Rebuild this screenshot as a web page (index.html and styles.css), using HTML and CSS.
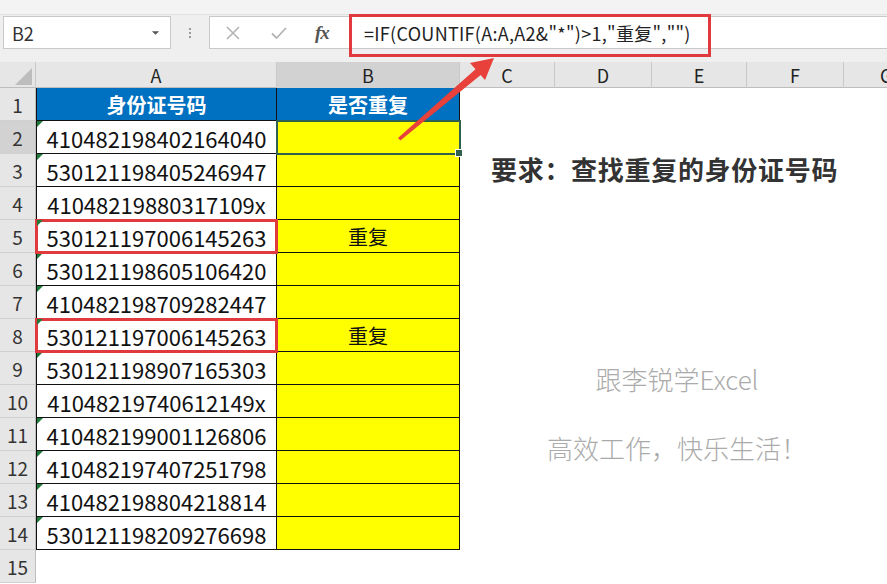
FILE: index.html
```html
<!DOCTYPE html>
<html lang="zh-CN">
<head>
<meta charset="UTF-8" />
<meta name="viewport" content="width=device-width, initial-scale=1" />
<title>查找重复的身份证号码</title>
<link rel="stylesheet" href="styles.css">
</head>
<body>

  <div class="top-strip"></div>

  <!-- barra de fórmulas -->
  <div class="formula-bar">
    <div class="name-box">
      <span>B2</span>
      <svg class="caret" viewBox="0 0 10 6" aria-hidden="true"><path d="M1 1h8L5 5z" fill="#555"/></svg>
    </div>
    <div class="grip"><i></i><i></i><i></i></div>
    <div class="formula-box">
      <div class="fx-buttons">
        <svg viewBox="0 0 20 20" aria-hidden="true"><path d="M4 4l12 12M16 4L4 16" stroke="#b4b4b4" stroke-width="1.6" fill="none"/></svg>
        <svg viewBox="0 0 20 20" aria-hidden="true"><path d="M3 10.5l4.5 4.5L17 5" stroke="#b4b4b4" stroke-width="1.8" fill="none"/></svg>
        <span class="fx">fx</span>
      </div>
      <div class="formula-input">=IF(COUNTIF(A:A,A2&amp;"*")&gt;1,"重复","")</div>
    </div>
  </div>

  <div class="sheet">
    <div class="col-heads">
      <div class="corner"><span></span></div>
      <div class="ch">A</div>
      <div class="ch sel">B</div>
      <div class="ch">C</div>
      <div class="ch">D</div>
      <div class="ch">E</div>
      <div class="ch">F</div>
      <div class="ch last">G</div>
    </div>

    <div class="row"><div class="rh">1</div><div class="cell a head">身份证号码</div><div class="cell head">是否重复</div></div>
    <div class="row"><div class="rh sel">2</div><div class="cell a flag">410482198402164040</div><div class="cell dup active"><span class="handle"></span></div></div>
    <div class="row"><div class="rh">3</div><div class="cell a flag">530121198405246947</div><div class="cell dup"></div></div>
    <div class="row"><div class="rh">4</div><div class="cell a">41048219880317109x</div><div class="cell dup"></div></div>
    <div class="row"><div class="rh">5</div><div class="cell a flag mark">530121197006145263</div><div class="cell dup">重复</div></div>
    <div class="row"><div class="rh">6</div><div class="cell a flag">530121198605106420</div><div class="cell dup"></div></div>
    <div class="row"><div class="rh">7</div><div class="cell a flag">410482198709282447</div><div class="cell dup"></div></div>
    <div class="row"><div class="rh">8</div><div class="cell a flag mark">530121197006145263</div><div class="cell dup">重复</div></div>
    <div class="row"><div class="rh">9</div><div class="cell a flag">530121198907165303</div><div class="cell dup"></div></div>
    <div class="row"><div class="rh">10</div><div class="cell a">41048219740612149x</div><div class="cell dup"></div></div>
    <div class="row"><div class="rh">11</div><div class="cell a flag">410482199001126806</div><div class="cell dup"></div></div>
    <div class="row"><div class="rh">12</div><div class="cell a flag">410482197407251798</div><div class="cell dup"></div></div>
    <div class="row"><div class="rh">13</div><div class="cell a flag">410482198804218814</div><div class="cell dup"></div></div>
    <div class="row"><div class="rh">14</div><div class="cell a flag">530121198209276698</div><div class="cell dup"></div></div>
    <div class="row"><div class="rh">15</div></div>

    <!-- cuadros de texto sobre la hoja -->
    <div class="note-title">要求：查找重复的身份证号码</div>
    <div class="note-sign">
      <p>跟李锐学Excel</p>
      <p>高效工作，快乐生活！</p>
    </div>
  </div>

  <!-- anotaciones rojas -->
  <div class="formula-mark"></div>
  <svg class="arrow" viewBox="0 0 887 584" aria-hidden="true">
    <path d="M399 138L400.5 139.5L482 73L478 68z" fill="#e8403a" stroke="#e8403a" stroke-width="1.5" stroke-linejoin="round"/>
    <polygon points="494,58 485,80 470,63" fill="#e8403a"/>
  </svg>

</body>
</html>
```

FILE: styles.css
```css
body {
  margin: 0;
  width: 887px;
  height: 584px;
  overflow: hidden;
  position: relative;
  background: #fff;
  font-family: "Noto Sans CJK SC", "Noto Sans", sans-serif;
  color: #222;
}
.top-strip {
  height: 14px;
  background: #f3f3f3;
  border-bottom: 1px solid #e1e1e1;
}
.formula-bar {
  height: 47px;
  background: #efefef;
  display: flex;
  align-items: flex-start;
  padding-top: 1px;
  box-sizing: border-box;
}
.name-box {
  margin-left: 3px;
  width: 168px;
  height: 33px;
  box-sizing: border-box;
  background: #fff;
  border: 1px solid #c9c9c9;
  display: flex;
  align-items: center;
  justify-content: space-between;
  padding: 0 10px 0 8px;
  font-size: 18px;
  color: #333;
}
.name-box .caret {
  width: 9px;
  height: 6px;
}
.grip {
  width: 38px;
  height: 33px;
  display: flex;
  flex-direction: column;
  align-items: center;
  justify-content: center;
  gap: 2px;
}
.grip i {
  width: 2px;
  height: 2px;
  background: #9a9a9a;
}
.formula-box {
  flex: 1;
  height: 33px;
  box-sizing: border-box;
  background: #fff;
  border: 1px solid #c9c9c9;
  border-right: none;
  display: flex;
  align-items: center;
}
.fx-buttons {
  width: 140px;
  display: flex;
  align-items: center;
  padding-left: 13px;
  gap: 26px;
  box-sizing: border-box;
}
.fx-buttons svg {
  width: 20px;
  height: 20px;
}
.fx {
  font-family: "Liberation Serif", serif;
  font-style: italic;
  font-weight: 700;
  font-size: 19px;
  color: #555;
  letter-spacing: -1px;
}
.formula-input {
  padding-left: 14px;
  font-size: 18px;
  letter-spacing: 0.3px;
  color: #222;
  white-space: nowrap;
}

/* hoja */
.sheet {
  position: relative;
}
.col-heads {
  display: grid;
  grid-template-columns: 36px 241px 183px 95px 97px 95px 97px 1fr;
  height: 26px;
  background: #e6e6e6;
  border-bottom: 1px solid #bdbdbd;
  box-sizing: border-box;
}
.corner {
  position: relative;
  border-right: 1px solid #c9c9c9;
}
.corner span {
  position: absolute;
  right: 3px;
  bottom: 3px;
  width: 0;
  height: 0;
  border-left: 17px solid transparent;
  border-bottom: 17px solid #bdbdbd;
}
.ch {
  border-right: 1px solid #c9c9c9;
  text-align: center;
  font-size: 18px;
  line-height: 26px;
  color: #222;
}
.ch.sel {
  background: #d2d2d2;
}
.ch.last {
  border-right: none;
  text-align: left;
  padding-left: 36px;
}
.row {
  display: grid;
  grid-template-columns: 36px 241px 183px;
  grid-template-rows: 33px;
  height: 33px;
}
.rh {
  background: #e6e6e6;
  border-right: 1px solid #bdbdbd;
  border-bottom: 1px solid #d0d0d0;
  box-sizing: border-box;
  text-align: center;
  font-size: 19px;
  line-height: 34px;
  color: #333;
}
.rh.sel {
  background: #d2d2d2;
}
.cell {
  position: relative;
  border-right: 1px solid #111;
  border-bottom: 1px solid #111;
  box-sizing: border-box;
  display: flex;
  align-items: center;
  justify-content: center;
  line-height: 1;
  padding-top: 1px;
}
.cell.a {
  border-left: 1px solid #111;
  background: #fff;
  font-size: 22px;
  color: #111;
}
.cell.head {
  background: #0070c0;
  color: #fff;
  font-weight: 700;
  font-size: 20px;
}
.cell.dup {
  background: #ffff00;
  font-size: 20px;
  color: #111;
}
.cell.flag::before {
  content: "";
  position: absolute;
  left: 0;
  top: 0;
  border-top: 6px solid #1f7a3a;
  border-right: 6px solid transparent;
}
.cell.mark {
  z-index: 2;
  outline: 3px solid #e0393e;
  outline-offset: -2px;
}
.cell.active {
  z-index: 2;
  outline: 2px solid #2f6050;
  outline-offset: -1px;
}
.handle {
  position: absolute;
  right: -4px;
  bottom: -4px;
  width: 6px;
  height: 6px;
  background: #2f6050;
  border: 1px solid #fff;
}
.note-title {
  position: absolute;
  left: 491px;
  top: 88px;
  font-size: 26px;
  letter-spacing: 0.7px;
  font-weight: 700;
  color: #333;
  white-space: nowrap;
}
.note-sign {
  position: absolute;
  left: 527px;
  top: 298px;
  width: 300px;
  text-align: center;
  color: #ababab;
  font-size: 26px;
  font-weight: 300;
}
.note-sign p {
  margin: 0 0 32px;
}
.formula-mark {
  position: absolute;
  z-index: 5;
  left: 349px;
  top: 14px;
  width: 362px;
  height: 43px;
  box-sizing: border-box;
  border: 3px solid #e0393e;
}
.arrow {
  position: absolute;
  z-index: 5;
  left: 0;
  top: 0;
  width: 887px;
  height: 584px;
  pointer-events: none;
}
```
